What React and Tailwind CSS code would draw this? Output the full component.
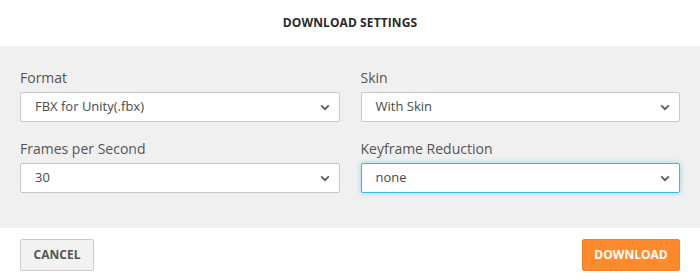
import React from 'react';

const Chevron = () => (
    <svg width="10" height="7" viewBox="0 0 10 7" className="shrink-0">
        <path d="M1.2 1.4 L5 5.2 L8.8 1.4" fill="none" stroke="#5a5a5a" strokeWidth="1.8" />
    </svg>
);

const Field = ({ label, value, focused }) => (
    <div className="flex flex-col">
        <div className="text-[14px] leading-[20px] text-[#555] mb-[4px]">{label}</div>
        <div
            className={
                focused
                    ? 'h-[30px] bg-white rounded-[2px] border border-[#3cb8e0] shadow-[0_0_5px_rgba(60,184,224,0.55)] flex items-center justify-between pl-[14px] pr-[9px]'
                    : 'h-[30px] bg-white rounded-[2px] border border-[#c8c8c8] flex items-center justify-between pl-[14px] pr-[9px]'
            }
        >
            <span className="text-[13px] text-[#4a4a4a]">{value}</span>
            <Chevron />
        </div>
    </div>
);

export default function App() {
    return (
        <div className="w-[700px] h-[280px] bg-white flex flex-col" style={{ fontFamily: '"Open Sans", "Noto Sans", sans-serif' }}>
            <div className="h-[46px] flex items-center justify-center">
                <h1 className="text-[12px] font-bold tracking-[0.1px] text-[#2a2a2a]">DOWNLOAD SETTINGS</h1>
            </div>
            <div className="bg-[#f0f0f0] h-[182px] px-[20px] pt-[22px] grid grid-cols-2 gap-x-[21px] gap-y-[17px] content-start">
                <Field label="Format" value="FBX for Unity(.fbx)" />
                <Field label="Skin" value="With Skin" />
                <Field label="Frames per Second" value="30" />
                <Field label="Keyframe Reduction" value="none" focused />
            </div>
            <div className="flex justify-between items-start px-[20px] pt-[11px]">
                <button className="h-[32px] w-[74px] bg-[#f2f2f2] border border-[#cccccc] rounded-[2px] text-[12px] font-bold text-[#555]">CANCEL</button>
                <button className="h-[32px] w-[98px] bg-[#ff8a2e] border border-[#f2801f] rounded-[2px] text-[12px] font-bold text-white">DOWNLOAD</button>
            </div>
        </div>
    );
}
